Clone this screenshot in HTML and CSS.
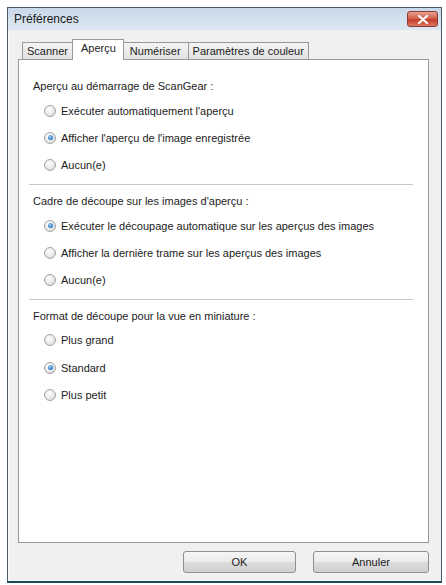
FILE: index.html
```html
<!DOCTYPE html>
<html lang="fr">
<head>
  <meta charset="UTF-8" />
  <title>Préférences</title>
  <link rel="stylesheet" href="styles.css">
</head>
<body>

  <div class="window">
    <div class="titlebar">
      <span class="title">Préférences</span>
      <span class="close">
        <svg width="10" height="9" viewBox="0 0 10 9"><path d="M1 1 L9 8 M9 1 L1 8" stroke="#fff" stroke-width="2.2" stroke-linecap="round"/></svg>
      </span>
    </div>

    <div class="client">
      <!-- Tabs -->
      <div class="tabs">
        <div class="tab">Scanner</div>
        <div class="tab active">Aperçu</div>
        <div class="tab tab-num">Numériser</div>
        <div class="tab">Paramètres de couleur</div>
      </div>

      <div class="panel">
        <div class="group">
          <div class="group-label">Aperçu au démarrage de ScanGear :</div>
          <div class="option"><span class="radio"></span>Exécuter automatiquement l'aperçu</div>
          <div class="option"><span class="radio checked"></span>Afficher l'aperçu de l'image enregistrée</div>
          <div class="option"><span class="radio"></span>Aucun(e)</div>
        </div>
        <hr class="sep">
        <div class="group">
          <div class="group-label">Cadre de découpe sur les images d'aperçu :</div>
          <div class="option"><span class="radio checked"></span>Exécuter le découpage automatique sur les aperçus des images</div>
          <div class="option"><span class="radio"></span>Afficher la dernière trame sur les aperçus des images</div>
          <div class="option"><span class="radio"></span>Aucun(e)</div>
        </div>
        <hr class="sep">
        <div class="group">
          <div class="group-label">Format de découpe pour la vue en miniature :</div>
          <div class="option"><span class="radio"></span>Plus grand</div>
          <div class="option"><span class="radio checked"></span>Standard</div>
          <div class="option"><span class="radio"></span>Plus petit</div>
        </div>
      </div>

      <div class="buttons">
        <button class="btn">OK</button>
        <button class="btn">Annuler</button>
      </div>
    </div>
  </div>

</body>
</html>
```

FILE: styles.css
```css
body {
  margin: 0;
  padding: 7px 0 0 7px;
  background: #fff;
  font-family: 'Liberation Sans', Arial, sans-serif;
  font-size: 11px;
  color: #1c1c1c;
}

.window {
  width: 433px;
  height: 573px;
  border: 1px solid #4a5866;
  border-bottom: 2px solid #1f4a58;
  background: #f0f0f0;
  display: flex;
  flex-direction: column;
}

.titlebar {
  height: 22px;
  display: flex;
  align-items: center;
  justify-content: space-between;
  padding: 0 3px 0 6px;
  background: linear-gradient(#c8d8ea, #d6e2ef 60%, #dde7f2);
}

.title {
  font-size: 12px;
  color: #1a1a1a;
}

.close {
  width: 29px;
  height: 14px;
  border-radius: 3px;
  border: 1px solid #8a3b33;
  background: linear-gradient(#e8a08e, #d05a44 50%, #c23b28 55%, #dc7a62);
  display: flex;
  align-items: center;
  justify-content: center;
}

.client {
  flex: 1;
  padding: 0 12px 8px 9px;
  display: flex;
  flex-direction: column;
  border-left: 1px solid #fafafa;
}

.tabs {
  display: flex;
  align-items: flex-end;
  height: 29px;
  padding-left: 4px;
  position: relative;
  z-index: 1;
}

.tab {
  height: 16px;
  line-height: 16px;
  padding: 0 4px;
  border: 1px solid #989898;
  border-bottom: none;
  background: linear-gradient(#f4f4f4, #e2e2e2);
}

.tab + .tab {
  margin-left: -1px;
}

.tab.tab-num {
  padding: 0 7px 0 6px;
}

.tab.active {
  height: 20px;
  line-height: 16px;
  background: #fff;
  margin-bottom: -1px;
  padding: 0 7px 0 8px;
  border-color: #9a9a9a;
}

.panel {
  flex: 1;
  background: #fff;
  border: 1px solid #9a9a9a;
  padding: 18px 15px 0 10px;
}

.group-label {
  height: 16px;
  line-height: 16px;
  padding-left: 4px;
  margin-bottom: 3px;
}

.option {
  height: 27.3px;
  display: flex;
  align-items: center;
  padding-left: 15px;
}

.radio {
  width: 10px;
  height: 10px;
  border-radius: 50%;
  border: 1px solid #a3a3a3;
  background: radial-gradient(circle at 40% 35%, #ffffff, #e6e6e6 60%, #cfcfcf);
  margin-right: 5px;
  flex-shrink: 0;
  display: flex;
  align-items: center;
  justify-content: center;
}

.radio.checked::after {
  content: '';
  width: 5px;
  height: 5px;
  border-radius: 50%;
  background: radial-gradient(circle at 40% 35%, #9cd0f4, #2a74c0 70%, #1b4f8e);
}

.sep {
  border: none;
  border-top: 1px solid #c8c8c8;
  border-bottom: 1px solid #fff;
  margin: 5px 0 7px;
}

.buttons {
  display: flex;
  justify-content: flex-end;
  gap: 17px;
  padding: 8px 0 0;
}

.btn {
  width: 113px;
  height: 22px;
  border: 1px solid #8f8f8f;
  border-radius: 3px;
  background: linear-gradient(#f5f5f5, #ebebeb 50%, #dcdcdc 51%, #d0d0d0);
  font-family: 'Liberation Sans', Arial, sans-serif;
  font-size: 11px;
  color: #1c1c1c;
  padding: 0;
}

.btn + .btn {
  width: 116px;
}
```
